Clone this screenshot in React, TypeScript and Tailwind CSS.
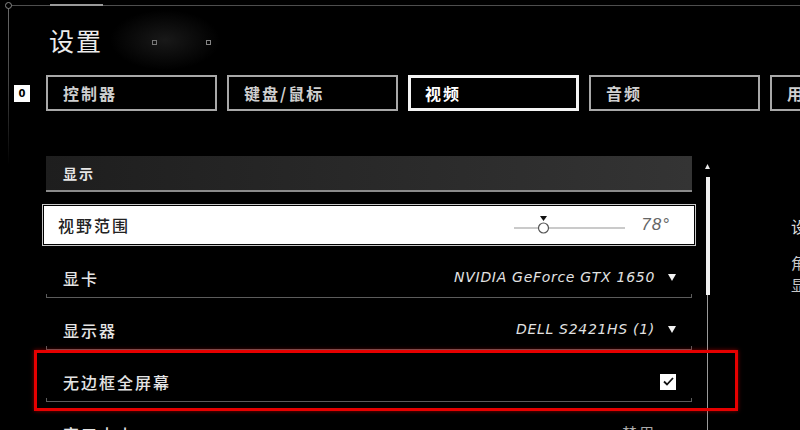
import React from 'react'

const cjk = { fontFamily: '"Noto Sans CJK SC", "Noto Sans", sans-serif' }
const latin = { fontFamily: '"DejaVu Sans", "Noto Sans", sans-serif' }

const tabs = ['控制器', '键盘/鼠标', '视频', '音频', '用户界面']

function Caret() {
  return (
    <svg width="8" height="7" viewBox="0 0 8 7" className="shrink-0">
      <path d="M0 0 H8 L4 7 Z" fill="#f2f2f2" />
    </svg>
  )
}

function Row({ label, children }: { label: string; children?: React.ReactNode }) {
  return (
    <div className="relative flex h-[52px] items-center justify-between border-b border-[#5c5c5c] pt-3 pl-[17px] pr-[16px]">
      <span className="text-[16px] font-medium tracking-[2px] text-[#e4e4e4]">{label}</span>
      <div className="flex items-center gap-[13px]">{children}</div>
      <span className="absolute bottom-0 left-0 h-[3px] w-px bg-[#5c5c5c]" />
      <span className="absolute bottom-0 right-0 h-[3px] w-px bg-[#5c5c5c]" />
    </div>
  )
}

export default function App() {
  return (
    <div className="relative h-[430px] w-[800px] overflow-hidden bg-black" style={cjk}>
      {/* 框线装饰 */}
      <div className="absolute left-[8px] top-[5px] h-[160px] w-px bg-gradient-to-b from-[#6a6a6a] via-[#444] to-transparent" />
      <div className="absolute left-[5px] top-[2px] h-[7px] w-[7px] rounded-full border border-[#8a8a8a] bg-black" />
      <div className="absolute left-[50px] top-[4px] h-[2px] w-[53px] bg-[#9a9a9a]" />
      <div className="absolute left-[110px] top-[10px] h-[60px] w-[110px] rounded-full bg-[radial-gradient(closest-side,rgba(70,70,70,0.35),transparent)]" />

      <div className="ml-[8px] mt-[5px] border-t border-[#4e4e4e]">
        {/* 标题 */}
        <div className="mt-[18px] flex h-[32px] items-center">
          <h1 className="ml-[41px] text-[25px] leading-[32px] tracking-[2px] text-[#ececec]">设置</h1>
          <span className="ml-[49px] mt-[4px] h-[5px] w-[5px] border border-[#8a8a8a]" />
          <span className="ml-[49px] mt-[4px] h-[5px] w-[5px] border border-[#8a8a8a]" />
        </div>

        {/* 选项卡 */}
        <div className="mt-[19px] flex h-[36px] items-center">
          <div className="ml-[6px] flex h-[17px] w-[16px] shrink-0 items-center justify-center bg-white text-[10px] font-bold text-black" style={latin}>
            0
          </div>
          <div className="ml-[16px] flex shrink-0 gap-[10px]">
            {tabs.map((t) => {
              const active = t === '视频'
              return (
                <div
                  key={t}
                  className={
                    active
                      ? 'flex h-[36px] w-[171px] shrink-0 items-center border-[3px] border-[#f4f4f4] pl-[14px] text-[16px] font-bold tracking-[2px] text-white'
                      : 'flex h-[36px] w-[171px] shrink-0 items-center border-2 border-[#a8a8a8] pl-[15px] text-[16px] font-bold tracking-[2px] text-[#cfcfcf]'
                  }
                >
                  {t}
                </div>
              )
            })}
          </div>
        </div>

        {/* 内容 */}
        <div className="mt-[45px] flex">
          <div className="ml-[38px] w-[646px] shrink-0">
            <div className="flex h-[36px] items-center border-b-2 border-[#8a8a8a] bg-gradient-to-r from-[#1e1e1e] to-[#343434] pl-[17px] text-[14px] font-bold tracking-[2px] text-[#e6e6e6]">
              显示
            </div>

            <div className="-mx-[4px] mt-[12px] border border-[#c8c8c8] bg-black p-px">
              <div className="flex h-[38px] items-center justify-between bg-white pl-[14px] pr-[24px]">
                <span className="text-[16px] font-medium tracking-[2px] text-[#222]">视野范围</span>
                <div className="flex items-center gap-[14px]">
                  <svg width="114" height="22" viewBox="0 0 114 22">
                    <line x1="1" y1="14" x2="112" y2="14" stroke="#b8b8b8" strokeWidth="1.5" />
                    <path d="M27 2 H34 L30.5 7 Z" fill="#111" />
                    <circle cx="30.5" cy="14" r="5" fill="#fff" stroke="#555" strokeWidth="1.2" />
                  </svg>
                  <span className="text-[17px] italic tracking-[1px] text-[#666]" style={{ fontFamily: '"Liberation Sans", sans-serif' }}>
                    78°
                  </span>
                </div>
              </div>
            </div>

            <Row label="显卡">
              <span className="text-[14px] italic tracking-[0.7px] text-[#e2e2e2]" style={latin}>
                NVIDIA GeForce GTX 1650
              </span>
              <Caret />
            </Row>
            <Row label="显示器">
              <span className="text-[14px] italic tracking-[0.7px] text-[#e2e2e2]" style={latin}>
                DELL S2421HS (1)
              </span>
              <Caret />
            </Row>
            <Row label="无边框全屏幕">
              <div className="flex h-[16px] w-[16px] items-center justify-center bg-white">
                <svg width="11" height="9" viewBox="0 0 11 9">
                  <path d="M1 4.5 L4 7.5 L10 1" fill="none" stroke="#111" strokeWidth="1.8" />
                </svg>
              </div>
            </Row>
            <Row label="窗口大小">
              <span className="mr-[20px] text-[15px] tracking-[2px] text-[#aaa]">禁用</span>
            </Row>
          </div>

          {/* 滚动条 */}
          <div className="ml-[13px] flex w-[5px] shrink-0 flex-col items-center">
            <svg width="5" height="5" viewBox="0 0 5 5" className="mt-[8px]">
              <path d="M2.5 0 L5 5 H0 Z" fill="#e8e8e8" />
            </svg>
            <div className="mt-[8px] h-[118px] w-[4px] bg-[#f0f0f0]" />
            <div className="h-[200px] w-px bg-[#9a9a9a]" />
          </div>

          {/* 说明 */}
          <div className="ml-[81px] w-[200px] shrink-0 whitespace-nowrap pt-[58px]">
            <p className="text-[16px] tracking-[1px] text-[#dcdcdc]">设置视野范围</p>
            <p className="mt-[14px] text-[15px] leading-[22px] text-[#c8c8c8]">角色视野的可见范围</p>
            <p className="text-[15px] leading-[22px] text-[#c8c8c8]">显示的游戏画面</p>
          </div>
        </div>
      </div>

      {/* 红框标注 */}
      <div className="pointer-events-none absolute left-[34px] top-[350px] h-[61px] w-[704px] border-[3px] border-[#e60000] shadow-[0_0_4px_rgba(255,0,0,0.5)]" />
    </div>
  )
}
